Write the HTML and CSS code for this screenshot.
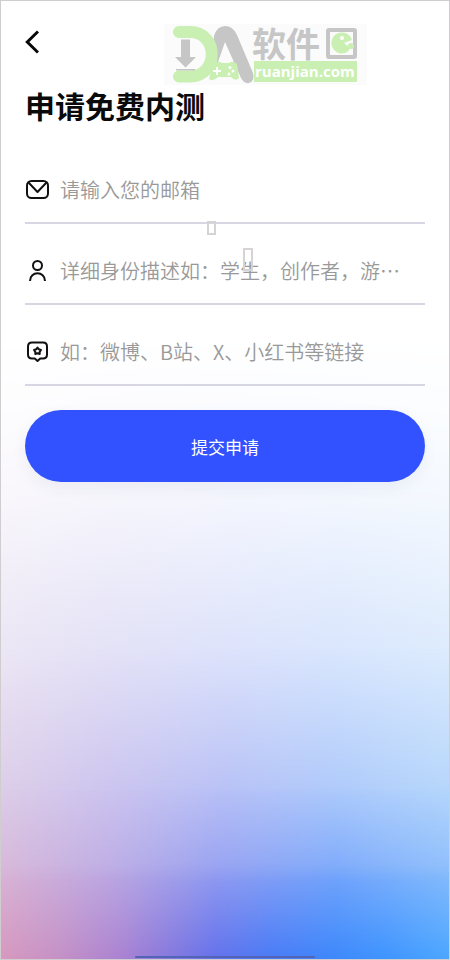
FILE: index.html
```html
<!DOCTYPE html>
<html lang="zh-CN">
<head>
<meta charset="utf-8">
<meta name="viewport" content="width=device-width, initial-scale=1">
<title>申请免费内测</title>
<link rel="stylesheet" href="styles.css">
</head>
<body>
<main class="screen">
  <div class="backdrop">
    <div class="tint tint-deep"></div>
    <div class="tint tint-mid"></div>
    <div class="tint tint-soft"></div>
    <div class="tint tint-pale"></div>
    <div class="tint tint-white"></div>
  </div>

  <header class="topbar">
    <button class="back" type="button" aria-label="返回">
      <svg width="14" height="24" viewBox="0 0 14 24" fill="none" stroke="#080808" stroke-width="3"><path d="M13 1.5 2.3 12 13 22.5"/></svg>
    </button>
  </header>

  <h1 class="title">申请免费内测</h1>

  <form class="form">
    <div class="field">
      <label class="icon" for="email" aria-label="邮箱">
        <svg width="24" height="24" viewBox="0 0 24 24" fill="none" stroke="#111" stroke-width="2" stroke-linejoin="round"><rect x="2" y="3" width="21" height="17" rx="4.5"/><path d="M3.5 4.5 12.5 14 21.5 4.5"/></svg>
      </label>
      <input class="input" id="email" type="email" placeholder="请输入您的邮箱">
    </div>
    <div class="field">
      <label class="icon" for="identity" aria-label="身份描述">
        <svg width="24" height="24" viewBox="0 0 24 24" fill="none" stroke="#111" stroke-width="2"><circle cx="12.5" cy="6.5" r="4.5"/><path d="M5 22C5 11.8 20 11.8 20 22"/></svg>
      </label>
      <input class="input" id="identity" type="text" placeholder="详细身份描述如：学生，创作者，游…">
    </div>
    <div class="field">
      <label class="icon" for="links" aria-label="链接">
        <svg width="24" height="24" viewBox="0 0 24 24" fill="none" stroke="#111" stroke-width="2" stroke-linejoin="round"><path d="M7 2.5H18Q22 2.5 22 6.5V14.5Q22 18.5 18 18.5H15.2L12.5 21 9.8 18.5H7Q3 18.5 3 14.5V6.5Q3 2.5 7 2.5Z"/><path d="M12.5 7.5 13.8 9.3 16 10 14.7 11.8 14.7 14 12.5 13.3 10.3 14 10.3 11.8 9 10 11.2 9.3Z"/></svg>
      </label>
      <input class="input" id="links" type="text" placeholder="如：微博、B站、X、小红书等链接">
    </div>
    <button class="submit" type="button">提交申请</button>
  </form>

  <div class="watermark">
    <svg class="watermark-art" width="203" height="61" viewBox="0 0 203 61">
      <path d="M48 42 50 12Q53 2 61 2 69 2 73 11L89 49Q91 57 85 59 80 60 77 54L61 18 54 38Z" fill="#c6c6c6"/>
      <path d="M15 8H26C55 8 55 52.5 26 52.5H15" fill="none" stroke="#c9efb2" stroke-width="12" stroke-linecap="round"/>
      <path d="M17 15.500H26V33H32L21.5 43.5 11 33H17ZM12 45H31V46.5H12Z" fill="#c6c6c6"/>
      <path d="M49 40Q54 36 58 39H65Q69 36 73 40L75 54Q72 58 67 53H54Q49 58 45 55Z" fill="#c9efb2"/>
      <path d="M49 47H57M53 43V51" stroke="#fff" stroke-width="2"/>
      <g fill="#fff"><circle cx="66" cy="43.5" r="1.5"/><circle cx="69" cy="47" r="1.5"/><circle cx="65" cy="50" r="1.5"/></g>
      <rect x="164" y="6" width="27" height="27" rx="1" fill="none" stroke="#c6c6c6" stroke-width="4"/>
      <path d="M188 16A10.5 10.5 0 1 0 184 27.500L186 24 180 19Z" fill="#c9efb2"/>
      <circle cx="178" cy="14" r="2" fill="#fff"/><circle cx="187" cy="22" r="3" fill="#c9efb2"/>
      <rect x="90" y="37" width="103" height="21" fill="#c9efb2"/>
      <text class="mark-name" x="88" y="33">软件</text>
      <text class="mark-site" x="91" y="53">ruanjian.com</text>
    </svg>
  </div>
  <span class="glyph-box glyph-small"></span>
  <span class="glyph-box glyph-tall"></span>
  <div class="home-bar"></div>
</main>
</body>
</html>
```
FILE: styles.css
```css
* {
  box-sizing: border-box;
}

body {
  margin: 0;
  font-family: "Noto Sans CJK SC", sans-serif;
}

.screen {
  position: relative;
  z-index: 0;
  min-height: 100vh;
  padding: 24px;
  border: 1px solid #cfcdd0;
}

/* Stacked horizontal tints, each fading out downwards into the next */
.backdrop,
.tint {
  position: absolute;
  inset: 0;
}

.backdrop {
  z-index: -1;
}

.tint-deep {
  background: linear-gradient(to right, #d799bf, #c591c6 13%, #aa82d2 27%, #8578de 38%, #6472ec 48%, #4a7bf6 60%, #3d88fc 74%, #3f95ff 86%, #4ca7ff);
}

.tint-mid {
  background: linear-gradient(to right, #d8b6d8, #bdabe3 24%, #959ff1 48%, #78a7fb 75%, #8abcfc);
  mask-image: linear-gradient(to bottom, #000 90%, transparent 100%);
}

.tint-soft {
  background: linear-gradient(to right, #dccde8, #ccc4ef 24%, #b8c1f6 50%, #aecafb 75%, #b5d6fb);
  mask-image: linear-gradient(to bottom, #000 82%, transparent 92%);
}

.tint-pale {
  background: linear-gradient(to right, #ece7f5, #e5e3f7 24%, #dfe4fb 50%, #dbe7fd 75%, #dfecfd);
  mask-image: linear-gradient(to bottom, #000 67%, transparent 83%);
}

.tint-white {
  background: #fff;
  mask-image: linear-gradient(to bottom, #000 34%, rgba(0, 0, 0, 0.88) 42%, rgba(0, 0, 0, 0.65) 52%, transparent 67%);
}

.topbar {
  display: flex;
  padding-top: 5px;
}

.back {
  display: flex;
  padding: 0;
  border: 0;
  background: none;
}

.title {
  margin: 31px 0 0;
  font-size: 30px;
  line-height: 40px;
  font-weight: 700;
  color: #0a0a0a;
}

.form {
  display: flex;
  flex-direction: column;
  margin-top: 18px;
}

.field {
  display: flex;
  align-items: flex-end;
  gap: 11px;
  height: 81px;
  padding-bottom: 17px;
  border-bottom: 2px solid #d7d7e4;
}

.icon {
  display: flex;
  padding-bottom: 3px;
}

.input {
  flex: 1;
  min-width: 0;
  height: 32px;
  padding: 0;
  border: 0;
  outline: 0;
  background: none;
  font: inherit;
  font-size: 20px;
  color: #222;
}

.input::placeholder {
  color: #999;
  font-weight: 350;
  opacity: 1;
}

.submit {
  height: 72px;
  margin-top: 24px;
  border: 0;
  border-radius: 36px;
  background: #3352ff;
  box-shadow: 0 6px 16px rgba(40, 50, 90, 0.06);
  color: #fff;
  font: inherit;
  font-size: 17px;
}

.watermark {
  position: absolute;
  top: 23px;
  left: 163px;
  background: #fbfbfb;
}

.watermark-art {
  display: block;
  overflow: visible;
}

.mark-name {
  font-size: 34px;
  font-weight: 700;
  fill: #c6c6c6;
}

.mark-site {
  font-family: "Open Sans", sans-serif;
  font-size: 15px;
  font-weight: 700;
  fill: #fff;
}

.glyph-box {
  position: absolute;
  border: 2px solid #d6d3d4;
}

.glyph-small {
  top: 220px;
  left: 206px;
  width: 9px;
  height: 14px;
}

.glyph-tall {
  top: 247px;
  left: 242px;
  width: 10px;
  height: 23px;
}

.home-bar {
  position: absolute;
  bottom: 1px;
  left: 30%;
  width: 40%;
  height: 2px;
  border-radius: 1px;
  background: #5363b5;
}
```
